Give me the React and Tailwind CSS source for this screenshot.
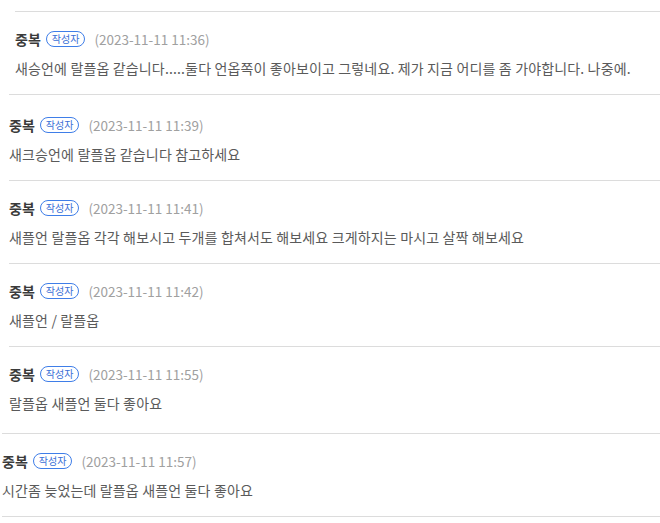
import React from 'react'

const COMMENTS = [
  {
    time: '2023-11-11 11:36',
    body: '새승언에 랄플옵 같습니다.....둘다 언옵쪽이 좋아보이고 그렇네요. 제가 지금 어디를 좀 가야합니다. 나중에.',
    wrap: 'ml-[15px] pt-[17px] pb-[16px]',
  },
  {
    time: '2023-11-11 11:39',
    body: '새크승언에 랄플옵 같습니다 참고하세요',
    wrap: 'ml-[9px] pt-[20px] pb-[16px]',
  },
  {
    time: '2023-11-11 11:41',
    body: '새플언 랄플옵 각각 해보시고 두개를 합쳐서도 해보세요 크게하지는 마시고 살짝 해보세요',
    wrap: 'ml-[9px] pt-[17px] pb-[16px]',
  },
  {
    time: '2023-11-11 11:42',
    body: '새플언 / 랄플옵',
    wrap: 'ml-[9px] pt-[17px] pb-[16px]',
  },
  {
    time: '2023-11-11 11:55',
    body: '랄플옵 새플언 둘다 좋아요',
    wrap: 'ml-[9px] pt-[17px] pb-[20px]',
  },
  {
    time: '2023-11-11 11:57',
    body: '시간좀 늦었는데 랄플옵 새플언 둘다 좋아요',
    wrap: 'ml-[2px] pt-[17px] pb-[16px] border-b',
  },
]

function Comment({ c }) {
  return (
    <div className={`border-t border-[#dcdcdc] ${c.wrap}`}>
      <div className="flex items-center h-5">
        <span className="text-[14px] font-bold text-[#3a3a3a]">중복</span>
        <span className="ml-[5px] h-[16px] px-[5px] flex items-center rounded-full border border-[#3f7ee8] text-[10px] leading-none text-[#3a6fd6]">
          작성자
        </span>
        <span className="ml-[9px] text-[13.5px] text-[#a0a0a0]">({c.time})</span>
      </div>
      <p className="mt-[9px] text-[14px] tracking-[0.15px] leading-5 text-[#5a5a5a] whitespace-nowrap">{c.body}</p>
    </div>
  )
}

export default function App() {
  return (
    <div
      className="w-[660px] h-[523px] bg-white pt-[11px] overflow-hidden"
      style={{ fontFamily: '"Noto Sans CJK KR", "Noto Sans", sans-serif' }}
    >
      {COMMENTS.map((c) => (
        <Comment key={c.time} c={c} />
      ))}
    </div>
  )
}
